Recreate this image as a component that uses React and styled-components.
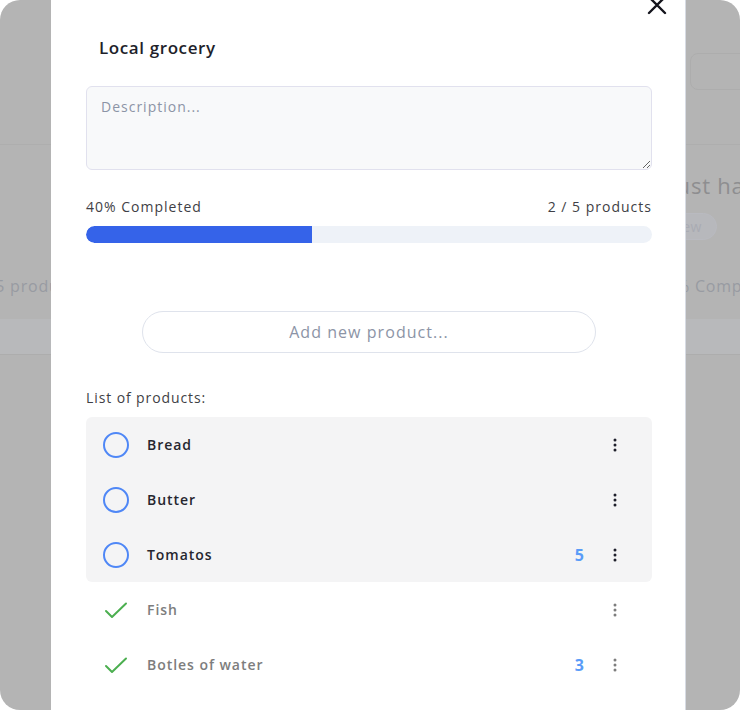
import React from "react";
import styled, { createGlobalStyle } from "styled-components";

const Global = createGlobalStyle`
  html, body { margin: 0; padding: 0; background: #ffffff; }
  body { font-family: "Open Sans", "Noto Sans", sans-serif; }
  * { box-sizing: border-box; }
`;

const FONT = `"Open Sans", "Noto Sans", sans-serif`;

const Frame = styled.div`
  position: relative;
  width: 740px;
  height: 710px;
  border-radius: 20px;
  overflow: hidden;
  background: #b4b4b4;
  font-family: ${FONT};
`;

/* faded page behind the modal */
const BackPage = styled.div`
  display: flex;
  flex-direction: column;
  height: 100%;
`;

const BackHeader = styled.div`
  height: 145px;
  border-bottom: 1px solid #aeaeae;
  display: flex;
  justify-content: flex-end;
  align-items: flex-start;
  padding: 53px 0 0;
`;

const BackButton = styled.div`
  width: 120px;
  height: 37px;
  margin-right: -70px;
  border: 1px solid #adadad;
  border-radius: 8px;
`;

const BackCards = styled.div`
  display: flex;
  gap: 40px;
  margin-left: -300px;
`;

const BackCard = styled.div`
  flex: 0 0 ${(p) => p.$w}px;
  height: 210px;
  display: flex;
  flex-direction: column;
  border-bottom: 1px solid #adadad;
`;

const BackBody = styled.div`
  flex: 1;
  padding: 26px 18px 0;
  display: flex;
  flex-direction: column;
`;

const BackTitle = styled.div`
  font-size: 22px;
  font-weight: 500;
  letter-spacing: 0.8px;
  color: #8e8e90;
  line-height: 28px;
  height: 28px;
  white-space: nowrap;
`;

const BackPill = styled.div`
  align-self: flex-start;
  margin-top: 14px;
  padding: 3px 14px;
  font-size: 14px;
  letter-spacing: 0.6px;
  color: #a9abb3;
  border: 1px solid #b9bac0;
  background: #b7b8bc;
  border-radius: 14px;
  height: 27px;
`;

const BackRow = styled.div`
  margin-top: 35px;
  display: flex;
  justify-content: space-between;
  font-size: 16px;
  letter-spacing: 0.8px;
  color: #989ba2;
  white-space: nowrap;
`;

const BackFooter = styled.div`
  height: 35px;
  background: #b8b9bb;
`;

/* modal */
const Modal = styled.div`
  position: absolute;
  top: 0;
  left: 51px;
  width: 635px;
  height: 740px;
  background: #ffffff;
  border-right: 1px solid #d7dbe3;
  padding: 38px 33px 0 35px;
  display: flex;
  flex-direction: column;
`;

const Close = styled.button`
  position: absolute;
  top: -6px;
  right: 17px;
  width: 22px;
  height: 22px;
  padding: 0;
  border: none;
  background: transparent;
  display: flex;
  align-items: center;
  justify-content: center;
`;

const Title = styled.h2`
  margin: 0 0 0 13px;
  font-size: 17px;
  line-height: 20px;
  font-weight: 600;
  color: #1e1f2b;
  letter-spacing: 0.6px;
`;

const Description = styled.textarea`
  margin-top: 28px;
  width: 100%;
  height: 84px;
  resize: vertical;
  border: 1px solid #e1e1ee;
  border-radius: 6px;
  background: #f8f9fa;
  padding: 10px 14px;
  font-family: ${FONT};
  font-size: 14px;
  line-height: 20px;
  letter-spacing: 1px;
  color: #333;
  outline: none;
  &::placeholder { color: #8c94a6; }
`;

const ProgressHead = styled.div`
  margin-top: 27px;
  display: flex;
  justify-content: space-between;
  font-size: 14px;
  line-height: 20px;
  color: #3f3f46;
  letter-spacing: 1px;
`;

const Track = styled.div`
  margin-top: 9px;
  height: 17px;
  border-radius: 9px;
  background: #eef2f8;
  overflow: hidden;
`;

const Fill = styled.div`
  height: 100%;
  background: #3563e9;
  border-radius: 9px 0 0 9px;
`;

const AddInput = styled.input`
  margin: 68px auto 0;
  width: 454px;
  height: 42px;
  border-radius: 21px;
  border: 1px solid #dfe3ec;
  background: #ffffff;
  text-align: center;
  font-family: ${FONT};
  font-size: 16px;
  letter-spacing: 1.05px;
  color: #333;
  outline: none;
  &::placeholder { color: #8c94a6; }
`;

const ListLabel = styled.div`
  margin-top: 35px;
  font-size: 14px;
  line-height: 20px;
  color: #3f3f46;
  letter-spacing: 0.9px;
`;

const Group = styled.ul`
  margin: ${(p) => (p.$first ? "9px" : "0")} 0 0;
  padding: 0;
  list-style: none;
  background: ${(p) => (p.$open ? "#f4f4f5" : "transparent")};
  border-radius: 6px;
`;

const Item = styled.li`
  height: 55px;
  display: flex;
  align-items: center;
  padding: 0 32px 0 16px;
`;

const Mark = styled.span`
  width: 28px;
  height: 28px;
  display: flex;
  align-items: center;
  justify-content: center;
  flex: none;
`;

const Name = styled.span`
  margin-left: 17px;
  flex: 1;
  font-size: 14px;
  font-weight: 600;
  letter-spacing: 0.95px;
  color: ${(p) => (p.$done ? "#7d7d7d" : "#26262f")};
`;

const Qty = styled.span`
  font-size: 16px;
  font-weight: 700;
  color: #5a9cf8;
  margin-right: 26px;
`;

const Menu = styled.span`
  width: 10px;
  display: flex;
  justify-content: center;
`;

const CircleIcon = () => (
  <svg width="28" height="28" viewBox="0 0 28 28">
    <circle cx="14" cy="14" r="12" fill="none" stroke="#4f87f6" strokeWidth="2" />
  </svg>
);

const CheckIcon = () => (
  <svg width="28" height="28" viewBox="0 0 28 28">
    <path d="M4 15 L10 21 L24 7.5" fill="none" stroke="#4caf50" strokeWidth="2" strokeLinecap="round" strokeLinejoin="round" />
  </svg>
);

const DotsIcon = ({ color }) => (
  <svg width="4" height="14" viewBox="0 0 4 14">
    <circle cx="2" cy="2" r="1.5" fill={color} />
    <circle cx="2" cy="7" r="1.5" fill={color} />
    <circle cx="2" cy="12" r="1.5" fill={color} />
  </svg>
);

const CloseIcon = () => (
  <svg width="20" height="20" viewBox="0 0 20 20">
    <path d="M2 2 L18 18 M18 2 L2 18" stroke="#14141c" strokeWidth="2.4" strokeLinecap="round" />
  </svg>
);

const open = [
  { name: "Bread" },
  { name: "Butter" },
  { name: "Tomatos", qty: 5 },
];
const done = [
  { name: "Fish" },
  { name: "Botles of water", qty: 3 },
];

const Row = ({ item, isDone }) => (
  <Item>
    <Mark>{isDone ? <CheckIcon /> : <CircleIcon />}</Mark>
    <Name $done={isDone}>{item.name}</Name>
    {item.qty ? <Qty>{item.qty}</Qty> : null}
    <Menu>
      <DotsIcon color={isDone ? "#7d7d7d" : "#1e1f2b"} />
    </Menu>
  </Item>
);

export default function App() {
  const pct = 40;
  return (
    <>
      <Global />
      <Frame>
        <BackPage>
          <BackHeader>
            <BackButton />
          </BackHeader>
          <BackCards>
            <BackCard $w={401}>
              <BackBody>
                <BackTitle>Weekly groceries</BackTitle>
                <BackPill>Done</BackPill>
                <BackRow>
                  <span>20% Completed</span>
                  <span>1 / 5 products</span>
                </BackRow>
              </BackBody>
              <BackFooter />
            </BackCard>
            <BackCard $w={457}>
              <BackBody />
              <BackFooter />
            </BackCard>
            <BackCard $w={300}>
              <BackBody>
                <BackTitle>Must have</BackTitle>
                <BackPill>New</BackPill>
                <BackRow>
                  <span>40% Completed</span>
                </BackRow>
              </BackBody>
              <BackFooter />
            </BackCard>
          </BackCards>
        </BackPage>

        <Modal>
          <Close aria-label="Close">
            <CloseIcon />
          </Close>
          <Title>Local grocery</Title>
          <Description placeholder="Description..." />
          <ProgressHead>
            <span>{pct}% Completed</span>
            <span>2 / 5 products</span>
          </ProgressHead>
          <Track>
            <Fill style={{ width: `${pct}%` }} />
          </Track>
          <AddInput placeholder="Add new product..." />
          <ListLabel>List of products:</ListLabel>
          <Group $open $first>
            {open.map((it) => (
              <Row key={it.name} item={it} />
            ))}
          </Group>
          <Group>
            {done.map((it) => (
              <Row key={it.name} item={it} isDone />
            ))}
          </Group>
        </Modal>
      </Frame>
    </>
  );
}
